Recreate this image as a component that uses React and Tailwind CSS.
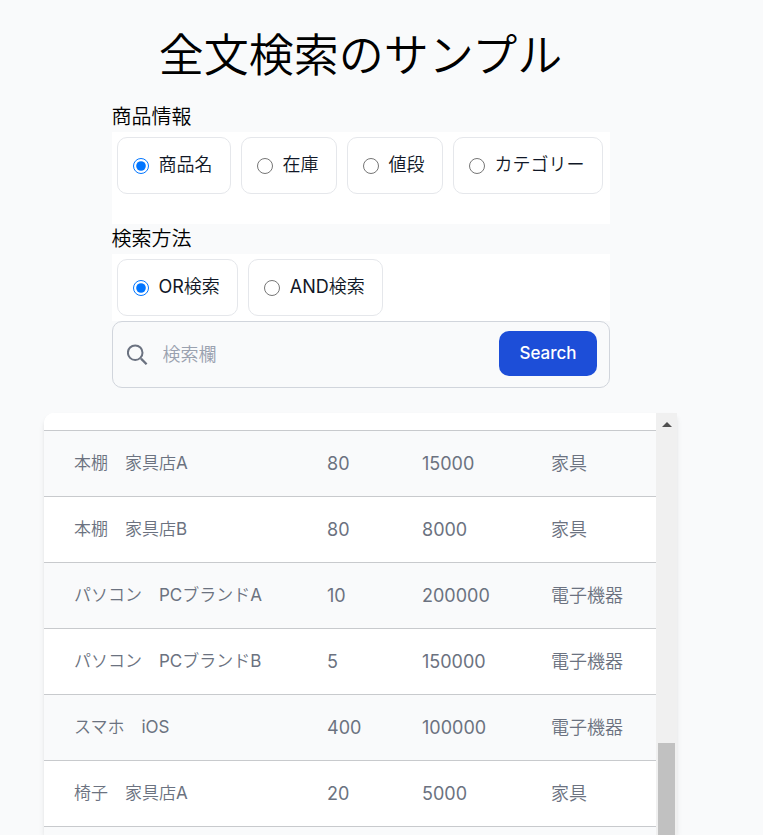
import { useState } from "react";

const FIELDS = [
  { value: "name", label: "商品名" },
  { value: "stock", label: "在庫" },
  { value: "price", label: "値段" },
  { value: "category", label: "カテゴリー" },
];

const METHODS = [
  { value: "or", label: "OR検索" },
  { value: "and", label: "AND検索" },
];

const PRODUCTS = [
  { name: "本棚　家具店A", stock: 80, price: 15000, category: "家具" },
  { name: "本棚　家具店B", stock: 80, price: 8000, category: "家具" },
  { name: "パソコン　PCブランドA", stock: 10, price: 200000, category: "電子機器" },
  { name: "パソコン　PCブランドB", stock: 5, price: 150000, category: "電子機器" },
  { name: "スマホ　iOS", stock: 400, price: 100000, category: "電子機器" },
  { name: "椅子　家具店A", stock: 20, price: 5000, category: "家具" },
];

function RadioGroup({ name, legend, options, value, onChange, className = "" }) {
  return (
    <fieldset>
      <legend className="text-[20px] leading-[30px] text-black">{legend}</legend>
      <div className={`flex items-start gap-2.5 bg-white p-[5px] ${className}`}>
        {options.map((o) => (
          <label key={o.value}
            className="flex h-[57px] items-center rounded-[10px] border border-gray-200 pl-[15px] pr-[17px] text-[18px] leading-[25px] text-[#111827]">
            <input type="radio" name={name} value={o.value} checked={value === o.value}
              onChange={() => onChange(o.value)} className="mr-2.5 h-[16px] w-[16px]" />
            <span className="pb-0.5">{o.label}</span>
          </label>
        ))}
      </div>
    </fieldset>
  );
}

export default function App() {
  const [field, setField] = useState("name");
  const [method, setMethod] = useState("or");
  const [query, setQuery] = useState("");

  return (
    <div className="flex h-screen flex-col items-center overflow-hidden bg-[#f9fafb] pr-[42px] font-['Inter','Noto_Sans_CJK_JP_DemiLight','Noto_Sans_CJK_JP_Light','Noto_Sans_CJK_JP',sans-serif]">
      <h1 className="pt-[18px] pb-[9px] text-[45px] leading-[75px] text-black">全文検索のサンプル</h1>

      <form className="w-full max-w-[498px] shrink-0" onSubmit={(e) => e.preventDefault()}>
        <RadioGroup name="field" legend="商品情報" options={FIELDS} value={field} onChange={setField} className="pb-[30px]" />
        <RadioGroup name="method" legend="検索方法" options={METHODS} value={method} onChange={setMethod} />

        <div className="flex h-[67px] items-center rounded-[10px] border border-gray-300 bg-[#f9fafb] pr-3 pl-3.5">
          <svg className="h-[22px] w-[22px] shrink-0 text-[#6b7280]" viewBox="0 0 22 22" fill="none" stroke="currentColor" strokeWidth="2" aria-hidden="true">
            <circle cx="8.2" cy="8.7" r="7.3" />
            <path d="M14 14.6L19.6 20.2" strokeWidth="2.3" />
          </svg>
          <input type="search" aria-label="検索欄" placeholder="検索欄" value={query} onChange={(e) => setQuery(e.target.value)}
            className="min-w-0 flex-1 bg-transparent px-3.5 text-[18px] leading-[25px] text-[#111827] outline-none placeholder:text-gray-400" />
          <button type="submit" className="mb-0.5 h-[45px] rounded-[10px] bg-[#1d4ed8] px-5 text-[17px] leading-[25px] font-medium text-white hover:bg-[#1e40af]">
            Search
          </button>
        </div>
      </form>

      <div className="mt-[25px] flex min-h-0 w-full max-w-[633px] flex-1 rounded-tl-[10px] bg-white shadow-md">
        <div className="min-w-0 flex-1 overflow-hidden rounded-tl-[10px]">
          <table className="w-full table-fixed border-collapse text-left text-[18px] leading-[25px] text-[#6b7280]">
            <colgroup>
              <col className="w-[253px]" />
              <col className="w-[95px]" />
              <col className="w-[129px]" />
              <col />
            </colgroup>
            <tbody>
              {/* tail of the row scrolled out of view */}
              <tr className="h-[17px] border-b border-[#c8cacd] bg-white"><td colSpan={4} /></tr>
              {PRODUCTS.map((p) => (
                <tr key={p.name} className="h-[66px] border-b border-[#c8cacd] even:bg-[#f9fafb]">
                  <td className="px-[30px] text-[17px] whitespace-nowrap">{p.name}</td>
                  <td className="px-[30px]">{p.stock}</td>
                  <td className="px-[30px]">{p.price}</td>
                  <td className="pl-[30px] whitespace-nowrap">{p.category}</td>
                </tr>
              ))}
              <tr className="h-[66px] bg-[#f9fafb]"><td colSpan={4} /></tr>
            </tbody>
          </table>
        </div>
        {/* scrollbar */}
        <div className="flex w-[21px] shrink-0 flex-col items-center bg-[#f0f0f0]">
          <svg className="mt-[9px] h-[5px] w-[10px] shrink-0" viewBox="0 0 10 5" aria-hidden="true">
            <path d="M0 5L5 0L10 5Z" fill="#505050" />
          </svg>
          <div className="h-[316px] shrink-0" />
          <div className="w-[17px] flex-1 bg-[#c1c1c1]" />
        </div>
      </div>
    </div>
  );
}
